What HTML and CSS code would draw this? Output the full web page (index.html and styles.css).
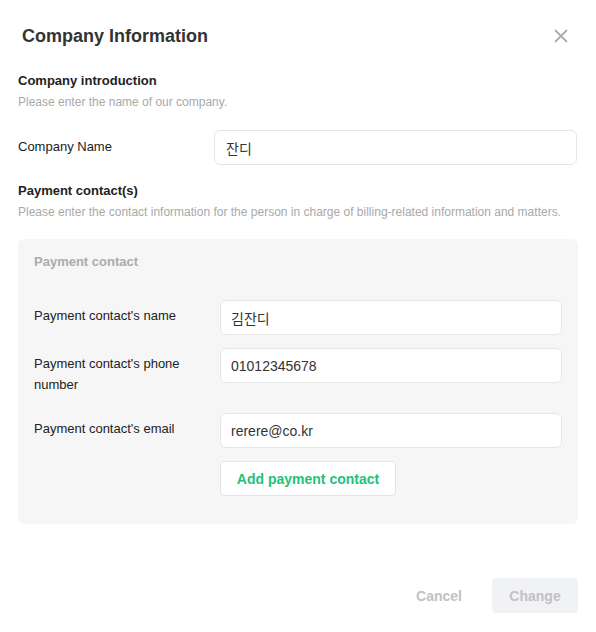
FILE: index.html
```html
<!DOCTYPE html>
<html lang="en">
<head>
<meta charset="utf-8">
<title>Company Information</title>
<link rel="stylesheet" href="styles.css">
</head>
<body>
<div class="modal">
  <header class="modal-header">
    <h1 class="modal-title">Company Information</h1>
    <button class="close-btn" aria-label="Close">
      <svg width="14" height="14" viewBox="0 0 14 14"><path d="M1 1L13 13M13 1L1 13" stroke="#ababab" stroke-width="1.8" fill="none"/></svg>
    </button>
  </header>

  <section class="section">
    <h2 class="section-title">Company introduction</h2>
    <p class="section-desc">Please enter the name of our company.</p>
  </section>

  <div class="field-row company-row">
    <label class="field-label">Company Name</label>
    <input class="text-input" type="text" value="잔디">
  </div>

  <section class="section section-payment">
    <h2 class="section-title">Payment contact(s)</h2>
    <p class="section-desc">Please enter the contact information for the person in charge of billing-related information and matters.</p>
  </section>

  <div class="contact-box">
    <h3 class="box-title">Payment contact</h3>
    <div class="contact-rows">
      <div class="contact-row">
        <label class="contact-label">Payment contact's name</label>
        <input class="text-input" type="text" value="김잔디">
      </div>
      <div class="contact-row">
        <label class="contact-label">Payment contact's phone number</label>
        <input class="text-input" type="text" value="01012345678">
      </div>
      <div class="contact-row">
        <label class="contact-label">Payment contact's email</label>
        <input class="text-input" type="text" value="rerere@co.kr">
      </div>
      <div class="contact-row">
        <span class="contact-label"></span>
        <div><button class="add-btn">Add payment contact</button></div>
      </div>
    </div>
  </div>

  <footer class="modal-footer">
    <button class="btn btn-cancel">Cancel</button>
    <button class="btn btn-change">Change</button>
  </footer>
</div>
</body>
</html>
```

FILE: styles.css
```css
* { box-sizing: border-box; }
html, body { margin: 0; padding: 0; background: #fff; }
body {
  font-family: "Liberation Sans", Arial, "Noto Sans CJK KR", sans-serif;
  color: #222;
}
.modal {
  width: 596px;
  padding: 0 18px;
}
.modal-header {
  display: flex;
  align-items: center;
  justify-content: space-between;
  padding-top: 24px;
  height: 48px;
}
.modal-title {
  margin: 0;
  padding-left: 4px;
  font-size: 18px;
  line-height: 24px;
  font-weight: bold;
  color: #333;
}
.close-btn {
  width: 14px;
  height: 14px;
  padding: 0;
  margin-right: 10px;
  border: 0;
  background: none;
  display: flex;
}
.section { margin-top: 23px; }
.section-payment { margin-top: 16px; }
.section-title {
  margin: 0;
  font-size: 13px;
  line-height: 20px;
  font-weight: bold;
  color: #222;
}
.section-desc {
  margin: 2px 0 0;
  font-size: 12px;
  line-height: 18px;
  color: #a9a9a9;
}
.field-row {
  display: flex;
  align-items: center;
  margin-top: 19px;
}
.field-label {
  width: 196px;
  flex: none;
  padding-bottom: 2px;
  font-size: 13px;
  line-height: 18px;
  color: #222;
}
.text-input {
  flex: 1;
  min-width: 0;
  height: 35px;
  margin: 0;
  padding: 0 11px;
  border: 1px solid #e6e6e6;
  border-radius: 6px;
  background: #fff;
  font-family: "Liberation Sans", Arial, "Noto Sans CJK KR", sans-serif;
  font-size: 14px;
  color: #333;
  outline: none;
}
.company-row .text-input { margin-right: 1px; }
.contact-box {
  margin-top: 18px;
  background: #f6f6f6;
  border-radius: 6px;
  padding: 14px 16px 28px;
}
.box-title {
  margin: 0;
  font-size: 13px;
  line-height: 18px;
  font-weight: bold;
  color: #ababab;
}
.contact-rows {
  margin-top: 29px;
  display: flex;
  flex-direction: column;
  gap: 13px;
}
.contact-row {
  display: flex;
  align-items: flex-start;
}
.contact-label {
  width: 186px;
  flex: none;
  padding: 5px 16px 5px 0;
  font-size: 13px;
  line-height: 21px;
  color: #222;
}
.contact-row .text-input { padding-left: 10px; }
.add-btn {
  width: 176px;
  height: 35px;
  padding: 0;
  border: 1px solid #e3e3e3;
  border-radius: 4px;
  background: #fff;
  font-family: "Liberation Sans", Arial, sans-serif;
  font-size: 14px;
  font-weight: bold;
  color: #1ec27a;
}
.modal-footer {
  display: flex;
  justify-content: flex-end;
  gap: 10px;
  margin-top: 54px;
}
.btn {
  width: 86px;
  height: 35px;
  padding: 0;
  border: 0;
  border-radius: 4px;
  font-family: "Liberation Sans", Arial, sans-serif;
  font-size: 14px;
  font-weight: bold;
  color: #c2c2c2;
  background: transparent;
}
.btn-change { background: #f1f2f5; }
```
